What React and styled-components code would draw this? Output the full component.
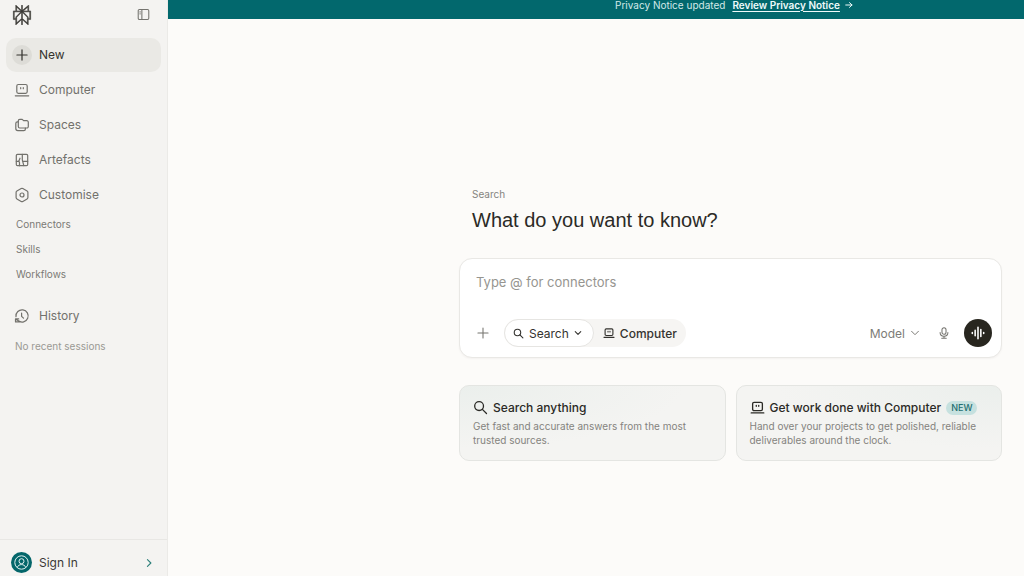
import React, { useState } from 'react';
import styled, { createGlobalStyle } from 'styled-components';
import { SiPerplexity } from 'react-icons/si';

const GlobalStyle = createGlobalStyle`
  * {
    box-sizing: border-box;
  }

  body {
    margin: 0;
    background: #fcfbf9;
    font-family: Inter, 'Liberation Sans', sans-serif;
    color: #2b2a26;
  }

  button,
  input {
    font: inherit;
    color: inherit;
    border: 0;
    padding: 0;
    background: none;
  }

  button {
    cursor: pointer;
  }

  a {
    color: inherit;
    text-decoration: none;
  }
`;

const Page = styled.div`
  display: flex;
  height: 100vh;
  overflow: hidden;
`;

const Sidebar = styled.aside`
  display: flex;
  flex-direction: column;
  flex: 0 0 168px;
  background: #f4f3f1;
  border-right: 1px solid #ebeae7;
`;

const SidebarTop = styled.div`
  display: flex;
  align-items: center;
  justify-content: space-between;
  height: 29px;
  padding: 0 17px 0 12px;
  margin-bottom: 9px;
`;

const LogoLink = styled.a`
  display: flex;
  color: #3a3935;
`;

const IconButton = styled.button`
  display: flex;
  align-items: center;
  justify-content: center;
  color: #75746f;
`;

const Nav = styled.nav`
  display: flex;
  flex-direction: column;
  gap: 1px;
  padding: 0 6px;
`;

const NavItem = styled.a`
  display: flex;
  align-items: center;
  gap: 7px;
  height: 34px;
  padding: 0 6px;
  border-radius: 10px;
  font-size: 12px;
  line-height: 16px;
  color: ${({ $active }) => ($active ? '#34332f' : '#72716c')};
  background: ${({ $active }) => ($active ? '#eae9e5' : 'transparent')};
`;

const NavIcon = styled.span`
  display: flex;
  align-items: center;
  justify-content: center;
  width: 20px;
  height: 20px;
  border-radius: 50%;
  background: ${({ $active }) => ($active ? '#dddcd7' : 'transparent')};
`;

const SubNav = styled.nav`
  display: flex;
  flex-direction: column;
  padding: 0 16px;
  margin-bottom: 12px;
`;

const SubLink = styled.a`
  font-size: 10px;
  line-height: 25px;
  color: #7b7a75;
`;

const EmptyNote = styled.p`
  margin: 6px 0 0;
  padding: 0 15px;
  font-size: 10px;
  line-height: 14px;
  color: #9a9994;
`;

const SignIn = styled.button`
  display: flex;
  align-items: center;
  gap: 7px;
  margin-top: auto;
  padding: 12px 13px 3px 11px;
  border-top: 1px solid #e8e7e4;
  font-size: 12px;
  line-height: 16px;
  color: #3a3935;
`;

const Avatar = styled.span`
  display: flex;
  color: #e4f3f3;
`;

const SignInArrow = styled.span`
  display: flex;
  margin-left: auto;
  color: #2c7f79;
`;

const Main = styled.main`
  display: flex;
  flex: 1;
  flex-direction: column;
  min-width: 0;
`;

const Banner = styled.div`
  display: flex;
  align-items: center;
  justify-content: center;
  gap: 7px;
  height: 19px;
  padding: 0 15px 10px 291px;
  background: #02686d;
  font-size: 10px;
  line-height: 14px;
  color: #d3e9e8;
  white-space: nowrap;
`;

const BannerLink = styled.a`
  display: flex;
  align-items: center;
  gap: 5px;
  font-weight: 600;
  color: #eefafa;

  span {
    text-decoration: underline;
    text-underline-offset: 2px;
  }
`;

const Content = styled.section`
  padding: 168px 22px 0 291px;
`;

const Eyebrow = styled.div`
  padding-left: 13px;
  font-size: 10px;
  line-height: 14px;
  color: #85847f;
`;

const Heading = styled.h1`
  margin: 4px 0 0;
  padding-left: 13px;
  font-family: 'Liberation Sans', Arial, sans-serif;
  font-size: 20px;
  line-height: 30px;
  font-weight: 400;
  color: #2b2a26;
`;

const Composer = styled.form`
  display: flex;
  flex-direction: column;
  justify-content: space-between;
  height: 100px;
  margin-top: 23px;
  padding: 13px 9px 10px 16px;
  background: #fff;
  border: 1px solid #e9e8e5;
  border-radius: 13px;
  box-shadow: 0 1px 2px rgba(40, 38, 30, 0.04);
`;

const Prompt = styled.input`
  width: 100%;
  height: 20px;
  outline: none;
  font-size: 13px;

  &::placeholder {
    color: #969590;
    opacity: 1;
  }
`;

const Toolbar = styled.div`
  display: flex;
  align-items: center;
`;

const ModeSwitch = styled.div`
  display: flex;
  margin-left: 14px;
  border-radius: 14px;
  background: #f6f5f3;
`;

const ModeButton = styled.button`
  display: flex;
  align-items: center;
  gap: 5px;
  height: 28px;
  padding: 0 ${({ $active }) => ($active ? '11px' : '8px')} 0 8px;
  border: 1px solid ${({ $active }) => ($active ? '#e6e5e2' : 'transparent')};
  border-radius: 14px;
  background: ${({ $active }) => ($active ? '#fff' : 'transparent')};
  font-size: 12px;
  font-weight: ${({ $active }) => ($active ? 400 : 500)};
  color: #34332f;
`;

const ModelButton = styled.button`
  display: flex;
  align-items: center;
  gap: 5px;
  margin-left: auto;
  font-size: 12px;
  color: #7d7c77;
`;

const MicButton = styled(IconButton)`
  margin: 0 14px 0 18px;
`;

const VoiceButton = styled.button`
  display: flex;
  align-items: center;
  justify-content: center;
  width: 28px;
  height: 28px;
  border-radius: 50%;
  background: #28261f;
  color: #fff;
`;

const Cards = styled.div`
  display: grid;
  grid-template-columns: 1fr 1fr;
  gap: 10px;
  margin-top: 27px;
`;

const Card = styled.a`
  display: block;
  height: 76px;
  padding: 13px;
  border: 1px solid #e4e5e2;
  border-radius: 10px;
  background: ${({ $glow }) => `radial-gradient(ellipse at ${$glow}, #ebefec 0%, #f4f4f2 60%)`};
`;

const CardTitle = styled.h2`
  display: flex;
  align-items: center;
  gap: 5px;
  margin: 0;
  font-size: 12px;
  line-height: 17px;
  font-weight: 500;
  white-space: nowrap;
`;

const Badge = styled.span`
  padding: 0 5px;
  border-radius: 7px;
  background: #c6e1df;
  font-size: 9px;
  line-height: 14px;
  font-weight: 500;
  color: #1f6f70;
`;

const CardText = styled.p`
  margin: 3px 0 0;
  font-size: 10px;
  line-height: 14px;
  color: #84837e;
`;

function Icon({ size = 16, stroke = 1.2, children }) {
  return (
    <svg
      width={size}
      height={size}
      viewBox="0 0 16 16"
      fill="none"
      stroke="currentColor"
      strokeWidth={stroke}
      strokeLinecap="round"
      strokeLinejoin="round"
      aria-hidden="true"
    >
      {children}
    </svg>
  );
}

const PlusIcon = (props) => (
  <Icon {...props}>
    <path d="M8 2.2v11.6M2.2 8h11.6" />
  </Icon>
);

const ComputerIcon = (props) => (
  <Icon {...props}>
    <rect x="2.8" y="2.5" width="10.4" height="8.8" rx="1.5" />
    <path d="M1.3 13.8h13.4M6.7 5.7v1M9.3 5.7v1" />
  </Icon>
);

const SpacesIcon = (props) => (
  <Icon {...props}>
    <path d="M5.8 2.3h2.4l1.4 1.4h3.2a1.5 1.5 0 0 1 1.5 1.5v4.3a1.5 1.5 0 0 1-1.5 1.5h-7a1.5 1.5 0 0 1-1.5-1.5V3.8a1.5 1.5 0 0 1 1.5-1.5z" />
    <path d="M4.2 4.8H3.4a1.6 1.6 0 0 0-1.6 1.6v5.2a2 2 0 0 0 2 2h6a1.6 1.6 0 0 0 1.6-1.6V11" />
  </Icon>
);

const ArtefactsIcon = (props) => (
  <Icon {...props}>
    <rect x="2.3" y="2.3" width="11.4" height="11.4" rx="1.2" />
    <path d="M8.3 2.3v5.6l1.500 5.800M8.500 9.300h5.200M2.300 9.300h2a1.200 1.200 0 0 1 1.200 1.200v3.200M4.800 9.200l1.200-3" />
  </Icon>
);

const CustomiseIcon = (props) => (
  <Icon {...props}>
    <path d="M7.2 1.6a1.6 1.6 0 0 1 1.6 0l4.3 2.4a1.6 1.6 0 0 1 .8 1.4v5.2a1.6 1.6 0 0 1-.8 1.4l-4.3 2.4a1.6 1.6 0 0 1-1.6 0L2.9 12a1.6 1.6 0 0 1-.8-1.4V5.4A1.6 1.6 0 0 1 2.9 4z" />
    <circle cx="8" cy="8" r="2" />
  </Icon>
);

const HistoryIcon = (props) => (
  <Icon {...props}>
    <path d="M2 8.600a6.100 6.100 0 1 1 2.400 4.200L1.800 11.200M1.500 13.700V10.900h3.200M7.600 5v3.300l1.900 1.900M6 13.700l-4.500.2" />
  </Icon>
);

const SearchIcon = (props) => (
  <Icon {...props}>
    <circle cx="6.5" cy="6.5" r="4.7" />
    <path d="M10 10l4.4 4.4" />
  </Icon>
);

const ChevronDown = (props) => (
  <Icon {...props}>
    <path d="M2.5 5.2L8 10.7l5.5-5.5" />
  </Icon>
);

const ChevronRight = (props) => (
  <Icon {...props}>
    <path d="M5.5 2.5L11 8l-5.5 5.5" />
  </Icon>
);

const ArrowRight = (props) => (
  <Icon {...props}>
    <path d="M1.5 8H14M9 3.2L14 8l-5 4.8" />
  </Icon>
);

const PanelIcon = (props) => (
  <Icon {...props}>
    <rect x="1.5" y="1.8" width="13" height="12.4" rx="1.5" />
    <path d="M6 2v12M3.6 4.8h.4M3.6 7.2h.4" />
  </Icon>
);

const MicIcon = (props) => (
  <Icon {...props}>
    <rect x="5.3" y="1" width="5.4" height="8.6" rx="2.7" />
    <path d="M2.8 7.3c0 3 2.2 4.9 5.2 4.9s5.2-1.9 5.2-4.9M8 12.2V15M5 15h6" />
  </Icon>
);

const VoiceIcon = (props) => (
  <Icon {...props}>
    <path d="M1.5 7.5v1M4.75 5v6M8 1.5v13M11.25 4v8M14.5 7.5v1" />
  </Icon>
);

const AvatarIcon = () => (
  <svg width="21" height="21" viewBox="0 0 21 21" fill="none" stroke="currentColor" aria-hidden="true">
    <circle cx="10.5" cy="10.5" r="10.5" fill="#04666a" stroke="none" />
    <circle cx="10.5" cy="10.5" r="6.7" />
    <circle cx="10.5" cy="9.2" r="2.5" />
    <path d="M6.2 15.5c.8-2 2.3-2.9 4.3-2.9s3.5.9 4.3 2.9" />
  </svg>
);

const navItems = [
  { label: 'New', icon: <PlusIcon size={14} stroke={1.4} />, active: true },
  { label: 'Computer', icon: <ComputerIcon /> },
  { label: 'Spaces', icon: <SpacesIcon /> },
  { label: 'Artefacts', icon: <ArtefactsIcon /> },
  { label: 'Customise', icon: <CustomiseIcon /> },
];

const subItems = ['Connectors', 'Skills', 'Workflows'];

function App() {
  const [query, setQuery] = useState('');

  return (
    <Page>
      <GlobalStyle />
      <Sidebar>
        <SidebarTop>
          <LogoLink href="#" aria-label="Home">
            <SiPerplexity size={20} stroke="currentColor" strokeWidth={0.6} />
          </LogoLink>
          <IconButton type="button" aria-label="Toggle sidebar">
            <PanelIcon size={13} stroke={1.3} />
          </IconButton>
        </SidebarTop>
        <Nav>
          {navItems.map((item) => (
            <NavItem key={item.label} href="#" $active={item.active}>
              <NavIcon $active={item.active}>{item.icon}</NavIcon>
              {item.label}
            </NavItem>
          ))}
        </Nav>
        <SubNav>
          {subItems.map((label) => (
            <SubLink key={label} href="#">{label}</SubLink>
          ))}
        </SubNav>
        <Nav>
          <NavItem href="#">
            <NavIcon><HistoryIcon /></NavIcon>
            History
          </NavItem>
        </Nav>
        <EmptyNote>No recent sessions</EmptyNote>
        <SignIn type="button">
          <Avatar><AvatarIcon /></Avatar>
          Sign In
          <SignInArrow><ChevronRight size={10} stroke={1.8} /></SignInArrow>
        </SignIn>
      </Sidebar>

      <Main>
        <Banner>
          Privacy Notice updated
          <BannerLink href="#">
            <span>Review Privacy Notice</span>
            <ArrowRight size={8} stroke={2} />
          </BannerLink>
        </Banner>
        <Content>
          <Eyebrow>Search</Eyebrow>
          <Heading>What do you want to know?</Heading>
          <Composer onSubmit={(e) => e.preventDefault()}>
            <Prompt
              type="text"
              aria-label="Search"
              placeholder="Type @ for connectors"
              value={query}
              onChange={(e) => setQuery(e.target.value)}
            />
            <Toolbar>
              <IconButton type="button" aria-label="Add">
                <PlusIcon size={14} stroke={1.2} />
              </IconButton>
              <ModeSwitch>
                <ModeButton type="button" $active>
                  <SearchIcon size={11} stroke={1.6} />
                  Search
                  <ChevronDown size={8} stroke={2.2} />
                </ModeButton>
                <ModeButton type="button">
                  <ComputerIcon size={12} stroke={1.5} />
                  Computer
                </ModeButton>
              </ModeSwitch>
              <ModelButton type="button">
                Model
                <ChevronDown size={10} stroke={1.6} />
              </ModelButton>
              <MicButton type="button" aria-label="Dictate">
                <MicIcon size={12} stroke={1.4} />
              </MicButton>
              <VoiceButton type="button" aria-label="Voice mode">
                <VoiceIcon size={14} stroke={1.8} />
              </VoiceButton>
            </Toolbar>
          </Composer>
          <Cards>
            <Card href="#" $glow="top left">
              <CardTitle>
                <SearchIcon size={15} stroke={1.4} />
                Search anything
              </CardTitle>
              <CardText>Get fast and accurate answers from the most trusted sources.</CardText>
            </Card>
            <Card href="#" $glow="top right">
              <CardTitle>
                <ComputerIcon size={15} stroke={1.4} />
                Get work done with Computer
                <Badge>NEW</Badge>
              </CardTitle>
              <CardText>Hand over your projects to get polished, reliable deliverables around the clock.</CardText>
            </Card>
          </Cards>
        </Content>
      </Main>
    </Page>
  );
}

export default App;
